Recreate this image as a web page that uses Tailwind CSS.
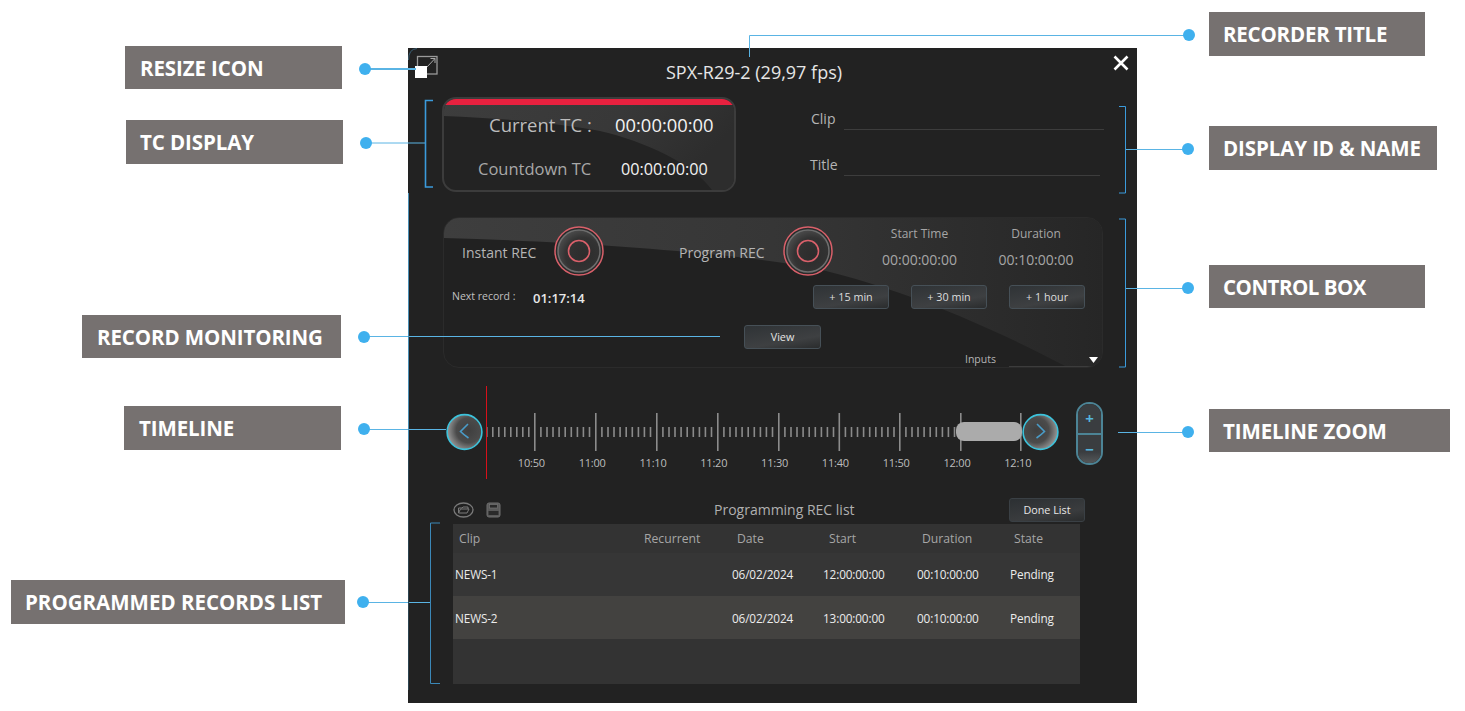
<!DOCTYPE html>
<html>
<head>
<meta charset="utf-8">
<script src="https://cdn.jsdelivr.net/npm/@tailwindcss/browser@4"></script>
</head>
<body class="m-0 bg-white">
<div class="relative w-[1465px] h-[711px] overflow-hidden bg-white font-['Open_Sans','Noto_Sans',sans-serif]">

  <!-- annotation labels -->
  <div class="absolute left-[125px] top-[46px] w-[217px] h-[43px] bg-[#767170] flex items-center pl-[15px] pt-[2px] text-white font-bold text-[20.5px] tracking-[-0.1px]">RESIZE ICON</div>
  <div class="absolute left-[126px] top-[120px] w-[217px] h-[44px] bg-[#767170] flex items-center pl-[14px] pt-[1px] text-white font-bold text-[20.5px] tracking-[-0.1px]">TC DISPLAY</div>
  <div class="absolute left-[82px] top-[315px] w-[259px] h-[43px] bg-[#767170] flex items-center pl-[15px] pt-[2px] text-white font-bold text-[20.5px] tracking-[-0.1px]">RECORD MONITORING</div>
  <div class="absolute left-[124px] top-[406px] w-[217px] h-[44px] bg-[#767170] flex items-center pl-[15px] pt-[1px] text-white font-bold text-[20.5px] tracking-[-0.1px]">TIMELINE</div>
  <div class="absolute left-[11px] top-[580px] w-[334px] h-[44px] bg-[#767170] flex items-center pl-[14px] pt-[1px] text-white font-bold text-[20.5px] tracking-[0px]">PROGRAMMED RECORDS LIST</div>
  <div class="absolute left-[1209px] top-[12px] w-[216px] h-[44px] bg-[#767170] flex items-center pl-[14px] text-white font-bold text-[20.5px] tracking-[-0.2px]">RECORDER TITLE</div>
  <div class="absolute left-[1209px] top-[126px] w-[228px] h-[44px] bg-[#767170] flex items-center pl-[14px] text-white font-bold text-[20.5px] tracking-[-0.1px]">DISPLAY ID &amp; NAME</div>
  <div class="absolute left-[1209px] top-[265px] w-[216px] h-[43px] bg-[#767170] flex items-center pl-[14px] pt-[1px] text-white font-bold text-[20.5px] tracking-[-0.5px]">CONTROL BOX</div>
  <div class="absolute left-[1209px] top-[409px] w-[241px] h-[43px] bg-[#767170] flex items-center pl-[14px] pt-[2px] text-white font-bold text-[20.5px] tracking-[-0.1px]">TIMELINE ZOOM</div>

  <!-- recorder window -->
  <div class="absolute left-[408px] top-[48px] w-[729px] h-[655px] bg-[#222222] pl-[34px] text-[#c4c4c4]">
    <!-- title bar -->
    <div class="relative h-[49px] -ml-[34px] flex justify-center pt-[12px] pr-[37px] text-[18px] leading-[24px] text-[#e6e6e6]">
      <svg class="absolute left-[6px] top-[7px]" width="26" height="25" viewBox="0 0 26 25">
        <rect x="3.5" y="1.5" width="19.5" height="17.5" fill="none" stroke="#9a9a9a" stroke-width="1.3"/>
        <path d="M13 12 L21 3.5 M16.5 3.5 H21 V8" fill="none" stroke="#a8a8a8" stroke-width="1"/>
        <rect x="1" y="11" width="12" height="12" fill="#ffffff"/>
      </svg>
      <span>SPX-R29-2 (29,97 fps)</span>
      <svg class="absolute right-[8px] top-[7px]" width="16" height="16" viewBox="0 0 16 16">
        <path d="M1.5 1.5 L14.5 14.5 M14.5 1.5 L1.5 14.5" stroke="#ffffff" stroke-width="2.6"/>
      </svg>
    </div>

    <!-- TC + ids -->
    <div class="flex h-[95px]">
      <div class="relative w-[294px] h-[95px] rounded-[14px] border-2 border-[#3c3c3c] overflow-hidden bg-[#232323]">
        <svg class="absolute inset-0" width="290" height="91" viewBox="0 0 290 91">
          <defs>
            <linearGradient id="g1" x1="0" y1="0" x2="1" y2="0.3">
              <stop offset="0" stop-color="#3d3d3d"/><stop offset="0.6" stop-color="#383838"/><stop offset="1" stop-color="#2d2d2d"/>
            </linearGradient>
          </defs>
          <path d="M0 0 H290 V91 H268 C250 65 200 42 156 32 C120 25 70 20 0 17 Z" fill="url(#g1)"/>
          <rect x="0" y="0" width="290" height="6" fill="#e8213f"/>
        </svg>
        <div class="relative flex items-center h-[26px] mt-[13px] pl-[45px]">
          <span class="w-[126px] text-[18.5px] text-[#bdbdbd]">Current TC :</span>
          <span class="text-[18.4px] text-[#f2f2f2]">00:00:00:00</span>
        </div>
        <div class="relative flex items-center h-[24px] mt-[19px] pl-[34px]">
          <span class="w-[143px] text-[16.5px] text-[#a8a8a8]">Countdown TC</span>
          <span class="text-[16.2px] text-[#f2f2f2]">00:00:00:00</span>
        </div>
      </div>
      <div class="ml-[74px] w-[294px] pt-[11px] text-[14px] text-[#b5b5b5]">
        <div class="flex h-[22px] items-center">
          <span class="w-[34px] pl-[1px] pb-[2px]">Clip</span>
          <span class="w-[260px] h-[22px] border-b border-[#3d3d3d]"></span>
        </div>
        <div class="flex h-[22px] items-center mt-[24px] w-[290px]">
          <span class="w-[34px] pb-[2px]">Title</span>
          <span class="flex-1 h-[22px] border-b border-[#3d3d3d]"></span>
        </div>
      </div>
    </div>

    <!-- control box -->
    <div class="relative mt-[25px] ml-[1px] w-[660px] h-[151px] rounded-[16px] border border-[#2b2b2b] overflow-hidden bg-[#212121]">
      <svg class="absolute inset-0" width="660" height="151" viewBox="0 0 660 151">
        <defs>
          <linearGradient id="g2" x1="0" y1="0" x2="1" y2="0">
            <stop offset="0" stop-color="#3e3e3e"/><stop offset="0.5" stop-color="#363636"/><stop offset="1" stop-color="#262626"/>
          </linearGradient>
        </defs>
        <path d="M0 0 H660 V151 H627 C540 105 430 58 340 45 C250 32 120 23 0 20 Z" fill="url(#g2)"/>
      </svg>
      <div class="relative flex h-[49px] mt-[8px] items-center">
        <span class="w-[110px] pl-[18px] pt-[4px] text-[14px] text-[#b5b5b5]">Instant REC</span>
        <svg width="50" height="50" viewBox="0 0 50 50">
          <defs><radialGradient id="r1" cx="0.6" cy="0.6" r="0.6"><stop offset="0" stop-color="#2c2c2c"/><stop offset="0.7" stop-color="#333333"/><stop offset="1" stop-color="#484848"/></radialGradient></defs>
          <circle cx="25" cy="25" r="24" fill="#2a2a2a" stroke="#d9606a" stroke-width="1.5"/>
          <circle cx="25" cy="25" r="21" fill="url(#r1)" stroke="#6e6e6e" stroke-width="1.5"/>
          <circle cx="25" cy="25" r="10.5" fill="none" stroke="#d9606a" stroke-width="1.6"/>
        </svg>
        <span class="ml-[75px] w-[104px] pt-[4px] text-[14px] text-[#b5b5b5]">Program REC</span>
        <svg width="50" height="50" viewBox="0 0 50 50">
          <circle cx="25" cy="25" r="24" fill="#2a2a2a" stroke="#d9606a" stroke-width="1.5"/>
          <circle cx="25" cy="25" r="21" fill="url(#r1)" stroke="#6e6e6e" stroke-width="1.5"/>
          <circle cx="25" cy="25" r="10.5" fill="none" stroke="#d9606a" stroke-width="1.6"/>
        </svg>
        <div class="ml-[28px] w-[117px] text-center -mt-[8px]">
          <div class="text-[12px] leading-[18px] text-[#a6a6a6]">Start Time</div>
          <div class="mt-[8px] text-[14px] leading-[18px] text-[#a6a6a6]">00:00:00:00</div>
        </div>
        <div class="w-[116px] text-center -mt-[8px]">
          <div class="text-[12px] leading-[18px] text-[#a6a6a6]">Duration</div>
          <div class="mt-[8px] text-[14px] leading-[18px] text-[#a6a6a6]">00:10:00:00</div>
        </div>
      </div>
      <div class="relative flex items-center h-[24px] mt-[10px] pl-[8px]">
        <span class="w-[81px] text-[10.5px] text-[#c0c0c0]">Next record :</span>
        <span class="pt-[3px] text-[13px] font-semibold text-[#e8e8e8]">01:17:14</span>
        <div class="ml-auto mr-[17px] flex gap-[22px]">
          <div class="w-[76px] h-[24px] flex items-center justify-center rounded-[3px] border border-[#465057] bg-[linear-gradient(170deg,#2f3336_0%,#3e4042_65%,#2a2c2d_100%)] text-[10.8px] text-[#dddddd]">+ 15 min</div>
          <div class="w-[76px] h-[24px] flex items-center justify-center rounded-[3px] border border-[#465057] bg-[linear-gradient(170deg,#2f3336_0%,#3e4042_65%,#2a2c2d_100%)] text-[10.8px] text-[#dddddd]">+ 30 min</div>
          <div class="w-[76px] h-[24px] flex items-center justify-center rounded-[3px] border border-[#465057] bg-[linear-gradient(170deg,#2f3336_0%,#3e4042_65%,#2a2c2d_100%)] text-[10.8px] text-[#dddddd]">+ 1 hour</div>
        </div>
      </div>
      <div class="relative mt-[16px] ml-[300px] w-[77px] h-[24px] flex items-center justify-center pt-[1px] rounded-[3px] border border-[#465057] bg-[linear-gradient(170deg,#2f3336_0%,#3e4042_65%,#2a2c2d_100%)] text-[10.8px] text-[#e4e4e4]">View</div>
      <div class="relative flex items-center h-[14px] mt-[4px] pl-[521px] text-[10.5px] text-[#b5b5b5]">
        <span class="w-[124px]">Inputs</span>
        <svg width="9" height="6" viewBox="0 0 9 6"><path d="M0 0 H9 L4.5 6 Z" fill="#ffffff"/></svg>
      </div>
      <div class="absolute right-0 bottom-0 w-[93px] h-px bg-[#3c3c3c]"></div>
    </div>

    <!-- timeline -->
    <div class="flex items-start mt-[17px] h-[95px] pl-[4px]">
      <svg class="mt-[28px] shrink-0" width="37" height="38" viewBox="0 0 37 38">
        <defs><radialGradient id="r2" cx="0.62" cy="0.45" r="0.6"><stop offset="0" stop-color="#3f3f3f"/><stop offset="0.6" stop-color="#4b4b4b"/><stop offset="1" stop-color="#929292"/></radialGradient></defs>
        <circle cx="18.5" cy="19" r="17.4" fill="url(#r2)" stroke="#3cc3dc" stroke-width="1.6"/>
        <path d="M22 11 L14.5 18.5 Q18 22 22.5 25" fill="none" stroke="#4a9cc8" stroke-width="1.6"/>
      </svg>
      <div class="relative ml-[3px] w-[536px] shrink-0">
        <div class="absolute left-0 top-[1px] w-px h-[93px] bg-[#d8101a]"></div>
        <svg class="block mt-[28px]" width="536" height="38" viewBox="0 0 536 38">
          <defs>
            <g id="tk">
              <rect x="0" y="0" width="1.6" height="38" fill="#8c8c8c"/>
              <rect x="6.1" y="14" width="1.6" height="10" fill="#8a8a8a"/>
              <rect x="12.2" y="14" width="1.6" height="10" fill="#8a8a8a"/>
              <rect x="18.2" y="14" width="1.6" height="10" fill="#8a8a8a"/>
              <rect x="24.3" y="14" width="1.6" height="10" fill="#8a8a8a"/>
              <rect x="30.4" y="14" width="1.6" height="10" fill="#8a8a8a"/>
              <rect x="36.5" y="14" width="1.6" height="10" fill="#8a8a8a"/>
              <rect x="42.6" y="14" width="1.6" height="10" fill="#8a8a8a"/>
              <rect x="48.6" y="14" width="1.6" height="10" fill="#8a8a8a"/>
              <rect x="54.7" y="14" width="1.6" height="10" fill="#8a8a8a"/>
            </g>
          </defs>
          <rect x="0" y="14" width="1.6" height="10" fill="#8a8a8a"/>
          <rect x="6" y="14" width="1.6" height="10" fill="#8a8a8a"/>
          <rect x="12" y="14" width="1.6" height="10" fill="#8a8a8a"/>
          <rect x="18" y="14" width="1.6" height="10" fill="#8a8a8a"/>
          <rect x="24" y="14" width="1.6" height="10" fill="#8a8a8a"/>
          <rect x="30" y="14" width="1.6" height="10" fill="#8a8a8a"/>
          <rect x="36" y="14" width="1.6" height="10" fill="#8a8a8a"/>
          <rect x="42" y="14" width="1.6" height="10" fill="#8a8a8a"/>
          <use href="#tk" x="48"/>
          <use href="#tk" x="109"/>
          <use href="#tk" x="170"/>
          <use href="#tk" x="231"/>
          <use href="#tk" x="292"/>
          <use href="#tk" x="352.5"/>
          <use href="#tk" x="413"/>
          <rect x="474" y="0" width="1.6" height="38" fill="#8c8c8c"/>
          <rect x="534" y="0" width="1.6" height="38" fill="#8c8c8c"/>
          <rect x="470" y="9" width="66" height="19" rx="8" fill="#ababab"/>
        </svg>
        <div class="flex w-max mt-[5px] ml-[15px] text-[11px] leading-[14px] text-[#bdbdbd] tracking-[-0.2px]">
          <span class="w-[60.8px] shrink-0 text-center">10:50</span>
          <span class="w-[60.8px] shrink-0 text-center">11:00</span>
          <span class="w-[60.8px] shrink-0 text-center">11:10</span>
          <span class="w-[60.8px] shrink-0 text-center">11:20</span>
          <span class="w-[60.8px] shrink-0 text-center">11:30</span>
          <span class="w-[60.8px] shrink-0 text-center">11:40</span>
          <span class="w-[60.8px] shrink-0 text-center">11:50</span>
          <span class="w-[60.8px] shrink-0 text-center">12:00</span>
          <span class="w-[60.8px] shrink-0 text-center">12:10</span>
        </div>
      </div>
      <svg class="mt-[28px] shrink-0" width="37" height="38" viewBox="0 0 37 38">
        <defs><radialGradient id="r3" cx="0.38" cy="0.45" r="0.6"><stop offset="0" stop-color="#3f3f3f"/><stop offset="0.6" stop-color="#4b4b4b"/><stop offset="1" stop-color="#929292"/></radialGradient></defs>
        <circle cx="18.5" cy="19" r="17.4" fill="url(#r3)" stroke="#3cc3dc" stroke-width="1.6"/>
        <path d="M15 11 L22.5 18.5 Q19 22 14.5 25" fill="none" stroke="#4a9cc8" stroke-width="1.6"/>
      </svg>
      <div class="ml-[17px] mt-[17px] w-[27px] h-[63px] rounded-[13px] border-2 border-[#4c8496] overflow-hidden flex flex-col shrink-0">
        <div class="h-[29px] bg-[#3a3d40] flex items-center justify-center text-[#55b4dc] text-[15px] font-bold leading-none">+</div>
        <div class="h-[2px] bg-[#4c8496]"></div>
        <div class="flex-1 bg-[linear-gradient(180deg,#3a3d40_0%,#3a3d40_60%,#55585a_100%)] flex items-center justify-center text-[#55b4dc] text-[15px] font-bold leading-none">−</div>
      </div>
    </div>

    <!-- list header -->
    <div class="flex items-center mt-[18px] w-[643px] h-[24px]">
      <svg class="ml-[11px]" width="21" height="16" viewBox="0 0 21 16">
        <ellipse cx="10.5" cy="8" rx="9.5" ry="7" fill="none" stroke="#7a7a7a" stroke-width="1.3"/>
        <path d="M5.5 11 V6 H9 L10 5 H15 V7 M5.5 11 L7.5 7 H16 L14 11 Z" fill="none" stroke="#7a7a7a" stroke-width="1"/>
      </svg>
      <svg class="ml-[12px]" width="15" height="16" viewBox="0 0 15 16">
        <rect x="1" y="1" width="13" height="14" rx="2" fill="#5a5a5a" stroke="#6e6e6e"/>
        <rect x="3.5" y="2.5" width="8" height="3.5" fill="#2a2a2a" stroke="#777" stroke-width="0.7"/>
        <rect x="2.5" y="9" width="10" height="4" fill="#2a2a2a"/>
      </svg>
      <span class="ml-[213px] pb-[2px] text-[14px] text-[#b0b0b0]">Programming REC list</span>
      <div class="ml-auto w-[76px] h-[24px] flex items-center justify-center pt-[1px] rounded-[3px] border border-[#3a4045] bg-[linear-gradient(170deg,#2c3033_0%,#3a3c3e_65%,#2a2c2d_100%)] text-[10.8px] text-[#e8e8e8]">Done List</div>
    </div>

    <!-- table -->
    <div class="mt-[2px] ml-[11px] w-[627px] h-[160px] bg-[#333333] flex flex-col">
      <div class="grid grid-cols-[187px_90px_92px_93px_93px_72px] items-center h-[29px] pt-[1px] text-[12.2px] text-[#a6a6a6]">
        <span class="pl-[6px]">Clip</span>
        <span class="pl-[4px]">Recurrent</span>
        <span class="pl-[7px]">Date</span>
        <span class="pl-[7px]">Start</span>
        <span class="pl-[7px]">Duration</span>
        <span class="pl-[6px]">State</span>
      </div>
      <div class="grid grid-cols-[187px_90px_92px_93px_93px_72px] items-center h-[43px] bg-[#363636] text-[11.8px] text-[#ececec] tracking-[-0.15px]">
        <span class="pl-[2px]">NEWS-1</span>
        <span></span>
        <span class="pl-[2px]">06/02/2024</span>
        <span class="pl-[1px]">12:00:00:00</span>
        <span class="pl-[2px]">00:10:00:00</span>
        <span class="pl-[2px]">Pending</span>
      </div>
      <div class="grid grid-cols-[187px_90px_92px_93px_93px_72px] items-center h-[43px] pt-[2px] bg-[#434240] text-[11.8px] text-[#ececec] tracking-[-0.15px]">
        <span class="pl-[2px]">NEWS-2</span>
        <span></span>
        <span class="pl-[2px]">06/02/2024</span>
        <span class="pl-[1px]">13:00:00:00</span>
        <span class="pl-[2px]">00:10:00:00</span>
        <span class="pl-[2px]">Pending</span>
      </div>
    </div>
  </div>

  <!-- leader lines and brackets drawn over everything -->
  <svg class="absolute inset-0 pointer-events-none" width="1465" height="711" viewBox="0 0 1465 711">
    <g fill="none" stroke="#5ab4e4">
      <path d="M365 69 H416" stroke-width="2"/>
      <path d="M366 143 H425"/>
      <path d="M364 336.5 H720"/>
      <path d="M364 429.5 H446"/>
      <path d="M363 602.5 H431"/>
      <path d="M1189 35.5 H749.5 V57"/>
      <path d="M1188 149.5 H1125"/>
      <path d="M1188 288.5 H1125"/>
      <path d="M1188 432.5 H1118"/>
      <path d="M408.5 60 Q408.5 49 417 48.5" stroke="#3a5f75"/>
      <path d="M408.5 193 V450" stroke="#4a8fb5"/>
      <path d="M408.5 450 V690" stroke="#2c4450"/>
      <path d="M433 100.5 H425.5 V187 H433" stroke="#3b9bdc" stroke-width="1.6"/>
      <path d="M1119 106.5 H1125.5 V193 H1119" stroke="#3b9bdc"/>
      <path d="M1119 219 H1125.5 V367 H1119" stroke="#3b9bdc"/>
      <path d="M440 523 H430.5 V683.5 H440" stroke="#3b88b8"/>
    </g>
    <g fill="#3fb0ee">
      <circle cx="365" cy="69" r="6"/>
      <circle cx="366" cy="143" r="6"/>
      <circle cx="364" cy="337" r="6"/>
      <circle cx="364" cy="429" r="6"/>
      <circle cx="363" cy="602" r="6"/>
      <circle cx="1189" cy="35" r="6"/>
      <circle cx="1188" cy="149" r="6"/>
      <circle cx="1188" cy="288" r="6"/>
      <circle cx="1188" cy="432" r="6"/>
    </g>
  </svg>
</div>
</body>
</html>
